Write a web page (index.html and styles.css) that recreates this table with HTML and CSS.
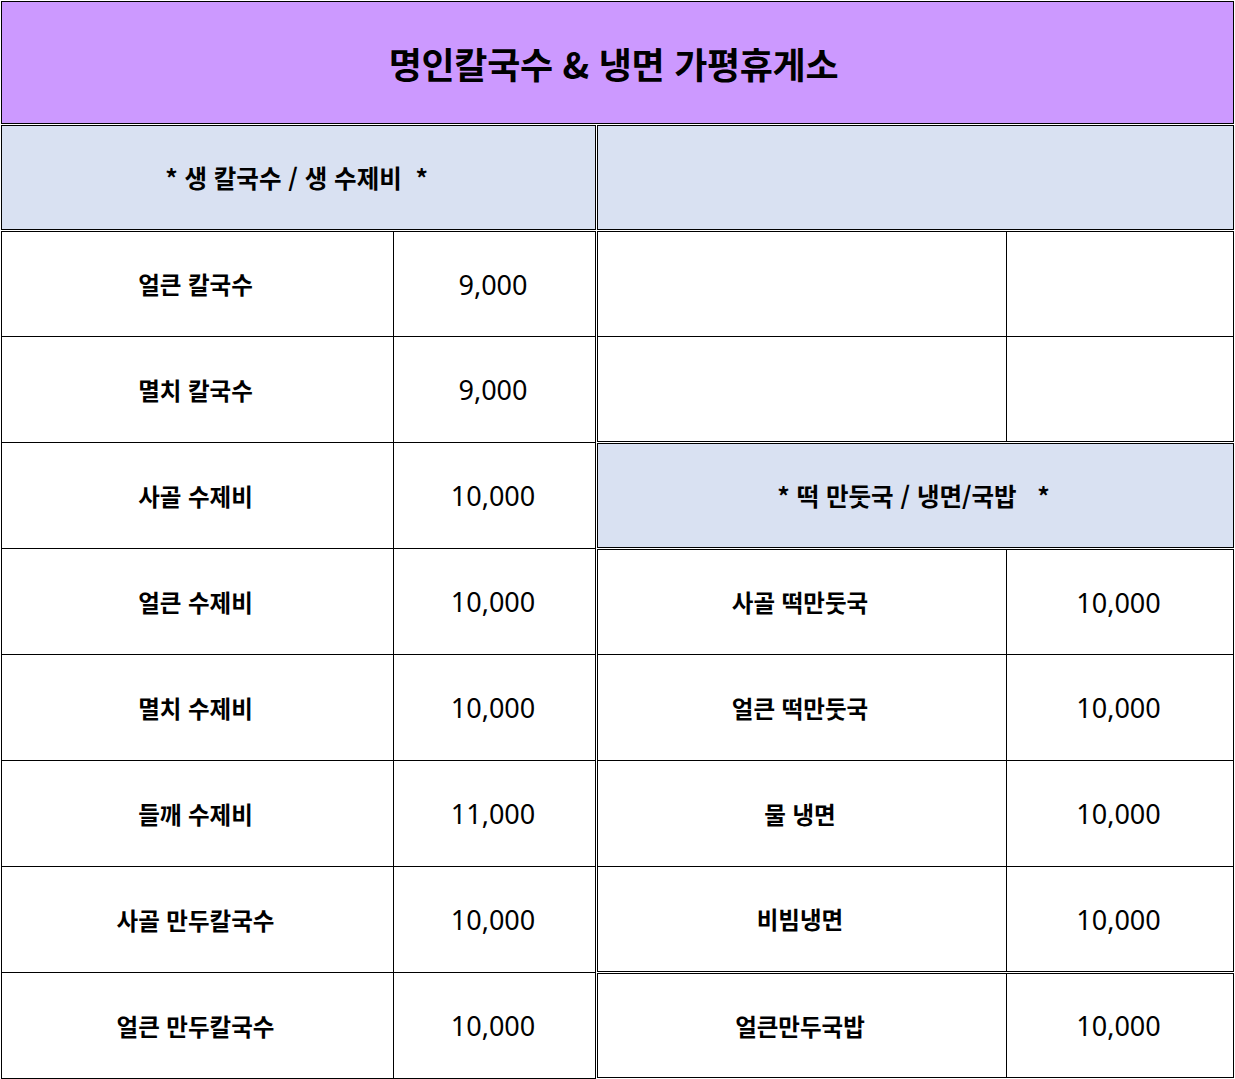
FILE: index.html
```html
<!DOCTYPE html>
<html lang="ko">
<head>
<meta charset="utf-8">
<title>명인칼국수 &amp; 냉면 가평휴게소</title>
<link rel="stylesheet" href="styles.css">
</head>
<body>
<div class="page">
  <div class="title">명인칼국수 &amp; 냉면 가평휴게소</div>
  <div class="cols">
    <div class="col left">
      <div class="section">* 생 칼국수 / 생 수제비  *</div>
      <div class="table">
        <div class="row h104"><div class="name">얼큰 칼국수</div><div class="price">9,000</div></div>
        <div class="row"><div class="name">멸치 칼국수</div><div class="price">9,000</div></div>
        <div class="row"><div class="name">사골 수제비</div><div class="price">10,000</div></div>
        <div class="row"><div class="name">얼큰 수제비</div><div class="price">10,000</div></div>
        <div class="row"><div class="name">멸치 수제비</div><div class="price">10,000</div></div>
        <div class="row"><div class="name">들깨 수제비</div><div class="price">11,000</div></div>
        <div class="row"><div class="name">사골 만두칼국수</div><div class="price">10,000</div></div>
        <div class="row"><div class="name">얼큰 만두칼국수</div><div class="price">10,000</div></div>
      </div>
    </div>
    <div class="col right">
      <div class="section empty"></div>
      <div class="table">
        <div class="row h104"><div class="name"></div><div class="price"></div></div>
        <div class="row h104"><div class="name"></div><div class="price"></div></div>
      </div>
      <div class="section">* 떡 만둣국 / 냉면/국밥   *</div>
      <div class="table">
        <div class="row h104"><div class="name">사골 떡만둣국</div><div class="price">10,000</div></div>
        <div class="row"><div class="name">얼큰 떡만둣국</div><div class="price">10,000</div></div>
        <div class="row"><div class="name">물 냉면</div><div class="price">10,000</div></div>
        <div class="row h104"><div class="name">비빔냉면</div><div class="price">10,000</div></div>
      </div>
      <div class="table">
        <div class="row h103"><div class="name">얼큰만두국밥</div><div class="price">10,000</div></div>
      </div>
    </div>
  </div>
</div>
</body>
</html>
```
FILE: styles.css
```css
html, body {
  margin: 0;
  padding: 0;
  background: #ffffff;
}
body {
  font-family: "Noto Sans CJK KR", "Noto Sans", sans-serif;
  color: #000;
}
.page {
  padding: 1px;
  width: 1233px;
  display: flex;
  flex-direction: column;
  gap: 1px;
}
.title {
  height: 121px;
  border: 1px solid #000;
  background: #cc99ff;
  display: flex;
  align-items: center;
  justify-content: center;
  font-size: 36px;
  font-weight: 700;
  letter-spacing: -0.3px;
  padding-right: 8px;
}
.cols {
  display: flex;
  gap: 1px;
  align-items: flex-start;
}
.col {
  display: flex;
  flex-direction: column;
  gap: 1px;
}
.left { width: 595px; }
.right { width: 637px; }
.section {
  height: 103px;
  border: 1px solid #000;
  background: #d9e1f2;
  display: flex;
  align-items: center;
  justify-content: center;
  font-size: 24.5px;
  font-weight: 700;
  white-space: pre;
  padding-right: 4px;
}
.table {
  border: 1px solid #000;
  display: flex;
  flex-direction: column;
}
.row {
  height: 105px;
  display: grid;
  grid-template-columns: 391px 1fr;
  border-top: 1px solid #000;
}
.right .row { grid-template-columns: 408px 1fr; }
.row:first-child { border-top: 0; }
.row.h104 { height: 104px; }
.row.h103 { height: 103px; }
.name, .price {
  display: flex;
  align-items: center;
  justify-content: center;
}
.name {
  font-size: 23.5px;
  font-weight: 700;
  padding-right: 4px;
}
.price {
  border-left: 1px solid #000;
  font-family: "Noto Sans", "Noto Sans CJK KR", sans-serif;
  font-size: 27px;
  font-weight: 400;
  padding-right: 3px;
}
```
